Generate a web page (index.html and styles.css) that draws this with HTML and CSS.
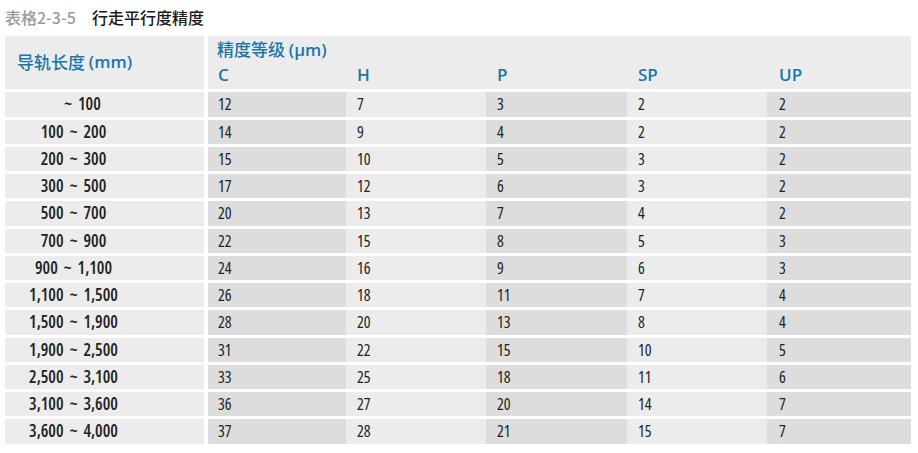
FILE: index.html
```html
<!DOCTYPE html>
<html lang="zh">
<head>
<meta charset="utf-8">
<link rel="stylesheet" href="styles.css">
</head>
<body>
<div class="page">
  <div class="title"><span class="tag">表格2-3-5</span><span class="name">行走平行度精度</span></div>
  <div class="table">
    <div class="head">
      <div class="h-len">导轨长度 <span class="lat">(mm)</span></div>
      <div class="h-grade">
        <div class="h-top">精度等级 <span class="lat">(μm)</span></div>
        <div class="h-cols"><span class="c1">C</span><span class="c2">H</span><span class="c3">P</span><span class="c4">SP</span><span class="c5">UP</span></div>
      </div>
    </div>
    <div class="row"><div class="len first">~ 100</div><div class="c1 d">12</div><div class="c2 l">7</div><div class="c3 d">3</div><div class="c4 l">2</div><div class="c5 d">2</div></div>
    <div class="row"><div class="len">100 ~ 200</div><div class="c1 d">14</div><div class="c2 l">9</div><div class="c3 d">4</div><div class="c4 l">2</div><div class="c5 d">2</div></div>
    <div class="row"><div class="len">200 ~ 300</div><div class="c1 d">15</div><div class="c2 l">10</div><div class="c3 d">5</div><div class="c4 l">3</div><div class="c5 d">2</div></div>
    <div class="row"><div class="len">300 ~ 500</div><div class="c1 d">17</div><div class="c2 l">12</div><div class="c3 d">6</div><div class="c4 l">3</div><div class="c5 d">2</div></div>
    <div class="row"><div class="len">500 ~ 700</div><div class="c1 d">20</div><div class="c2 l">13</div><div class="c3 d">7</div><div class="c4 l">4</div><div class="c5 d">2</div></div>
    <div class="row"><div class="len">700 ~ 900</div><div class="c1 d">22</div><div class="c2 l">15</div><div class="c3 d">8</div><div class="c4 l">5</div><div class="c5 d">3</div></div>
    <div class="row"><div class="len">900 ~ 1,100</div><div class="c1 d">24</div><div class="c2 l">16</div><div class="c3 d">9</div><div class="c4 l">6</div><div class="c5 d">3</div></div>
    <div class="row"><div class="len">1,100 ~ 1,500</div><div class="c1 d">26</div><div class="c2 l">18</div><div class="c3 d">11</div><div class="c4 l">7</div><div class="c5 d">4</div></div>
    <div class="row"><div class="len">1,500 ~ 1,900</div><div class="c1 d">28</div><div class="c2 l">20</div><div class="c3 d">13</div><div class="c4 l">8</div><div class="c5 d">4</div></div>
    <div class="row"><div class="len">1,900 ~ 2,500</div><div class="c1 d">31</div><div class="c2 l">22</div><div class="c3 d">15</div><div class="c4 l">10</div><div class="c5 d">5</div></div>
    <div class="row"><div class="len">2,500 ~ 3,100</div><div class="c1 d">33</div><div class="c2 l">25</div><div class="c3 d">18</div><div class="c4 l">11</div><div class="c5 d">6</div></div>
    <div class="row"><div class="len">3,100 ~ 3,600</div><div class="c1 d">36</div><div class="c2 l">27</div><div class="c3 d">20</div><div class="c4 l">14</div><div class="c5 d">7</div></div>
    <div class="row"><div class="len">3,600 ~ 4,000</div><div class="c1 d">37</div><div class="c2 l">28</div><div class="c3 d">21</div><div class="c4 l">15</div><div class="c5 d">7</div></div>
  </div>
</div>
</body>
</html>
```

FILE: styles.css
```css
html, body {
  margin: 0;
  padding: 0;
  background: #ffffff;
}
body {
  font-family: "Open Sans", "Roboto", "Noto Sans CJK SC", sans-serif;
  font-stretch: 80%;
  color: #222222;
}
.page {
  padding: 5px 7px 0 5px;
}
.title {
  height: 31px;
  display: flex;
  align-items: flex-start;
  font-family: "Noto Sans CJK SC", sans-serif;
  font-stretch: normal;
  font-size: 16px;
  line-height: 25px;
  font-weight: 500;
}
.tag {
  color: #9a9a9a;
  width: 87px;
}
.name {
  color: #1a1a1a;
}
.table {
  display: flex;
  flex-direction: column;
  gap: 3px;
  width: 906px;
}
.head {
  display: flex;
  height: 53.25px;
  color: #1a76aa;
  font-family: "Noto Sans CJK SC", sans-serif;
  font-stretch: normal;
  font-size: 17px;
  font-weight: 500;
}
.lat {
  font-family: "Open Sans", sans-serif;
  font-stretch: 100%;
  font-weight: 600;
}
.h-cols {
  font-family: "Open Sans", sans-serif;
  font-stretch: 95%;
  font-weight: 600;
}
.h-len {
  width: 199px;
  margin-right: 4px;
  background: #ececec;
  display: flex;
  align-items: center;
  padding-left: 12px;
  padding-bottom: 2px;
  box-sizing: border-box;
  white-space: pre;
}
.h-grade {
  flex: 1;
  background: #ececec;
  display: flex;
  flex-direction: column;
}
.h-top {
  padding-left: 9px;
  line-height: 25px;
  white-space: pre;
}
.h-cols {
  display: flex;
  line-height: 26px;
  font-size: 17px;
}
.h-cols span {
  padding-left: 10px;
  box-sizing: border-box;
}
.row {
  display: flex;
  height: 24.25px;
  font-size: 16px;
  line-height: 24px;
}
.row > div {
  padding-left: 10px;
  box-sizing: border-box;
}
.c1 { width: 138px; }
.c2 { width: 140px; }
.c3 { width: 141px; }
.c4 { width: 140px; }
.c5 { width: 144px; }
.h-cols .c2, .row .c2 { padding-left: 11px; }
.h-cols .c3, .row .c3 { padding-left: 11px; }
.h-cols .c4, .row .c4 { padding-left: 11px; }
.h-cols .c5, .row .c5 { padding-left: 12px; }
.row .len {
  width: 199px;
  margin-right: 4px;
  background: #ececec;
  font-size: 17px;
  font-stretch: 87.5%;
  font-weight: 600;
  text-align: center;
  padding-left: 0;
  padding-right: 62px;
  word-spacing: 3px;
}
.row .len.first {
  padding-left: 18px;
}
.row .d {
  background: #dcdddc;
}
.row .l {
  background: #ececec;
}
```
